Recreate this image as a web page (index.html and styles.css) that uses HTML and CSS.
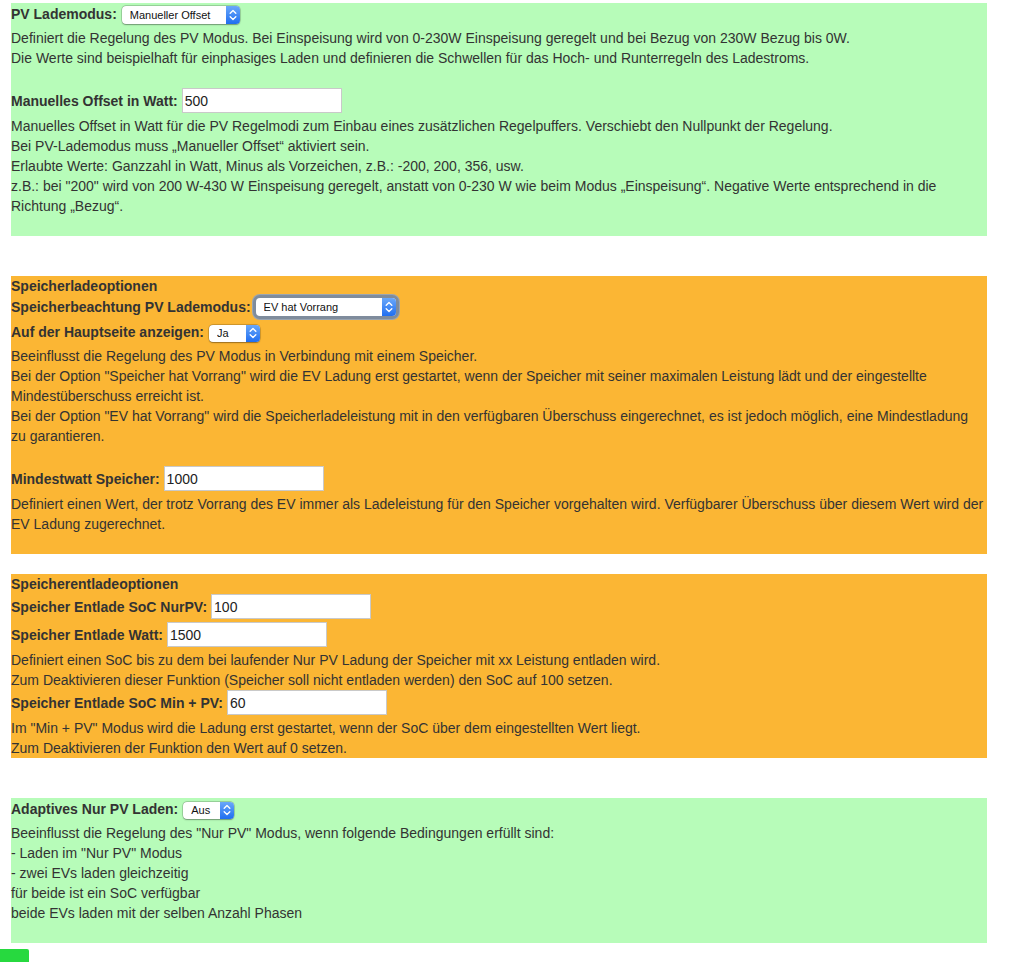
FILE: index.html
```html
<!DOCTYPE html>
<html lang="de">
<head>
<meta charset="utf-8">
<title>PV Einstellungen</title>
<link rel="stylesheet" href="styles.css">
</head>
<body>
<div class="page">

  <section class="panel green">
    <div class="ctl-row">
      <label class="lbl">PV Lademodus:</label>
      <span class="sel sel-pv">
        <select><option>Manueller Offset</option></select>
        <span class="stepper"><svg viewBox="0 0 14 18" width="14" height="18"><path d="M4.2 7.2 L7 4.6 L9.8 7.2 M4.2 10.8 L7 13.4 L9.8 10.8" fill="none" stroke="#fff" stroke-width="1.4" stroke-linecap="round" stroke-linejoin="round"/></svg></span>
      </span>
    </div>
    <p class="desc">Definiert die Regelung des PV Modus. Bei Einspeisung wird von 0-230W Einspeisung geregelt und bei Bezug von 230W Bezug bis 0W.<br>Die Werte sind beispielhaft für einphasiges Laden und definieren die Schwellen für das Hoch- und Runterregeln des Ladestroms.</p>
    <div class="blank"></div>
    <div class="inp-row">
      <label class="lbl">Manuelles Offset in Watt:</label>
      <input class="inp" type="text" value="500">
    </div>
    <p class="desc">Manuelles Offset in Watt für die PV Regelmodi zum Einbau eines zusätzlichen Regelpuffers. Verschiebt den Nullpunkt der Regelung.<br>Bei PV-Lademodus muss „Manueller Offset“ aktiviert sein.<br>Erlaubte Werte: Ganzzahl in Watt, Minus als Vorzeichen, z.B.: -200, 200, 356, usw.<br>z.B.: bei "200" wird von 200 W-430 W Einspeisung geregelt, anstatt von 0-230 W wie beim Modus „Einspeisung“. Negative Werte entsprechend in die Richtung „Bezug“.</p>
  </section>

  <section class="panel orange gap-40">
    <div class="title">Speicherladeoptionen</div>
    <div class="ctl-row">
      <label class="lbl">Speicherbeachtung PV Lademodus:</label>
      <span class="sel sel-speicher focused">
        <select><option>EV hat Vorrang</option></select>
        <span class="stepper"><svg viewBox="0 0 14 18" width="14" height="18"><path d="M4.2 7.2 L7 4.6 L9.8 7.2 M4.2 10.8 L7 13.4 L9.8 10.8" fill="none" stroke="#fff" stroke-width="1.4" stroke-linecap="round" stroke-linejoin="round"/></svg></span>
      </span>
    </div>
    <div class="ctl-row">
      <label class="lbl">Auf der Hauptseite anzeigen:</label>
      <span class="sel sel-small">
        <select><option>Ja</option></select>
        <span class="stepper"><svg viewBox="0 0 14 18" width="14" height="18"><path d="M4.2 7.2 L7 4.6 L9.8 7.2 M4.2 10.8 L7 13.4 L9.8 10.8" fill="none" stroke="#fff" stroke-width="1.4" stroke-linecap="round" stroke-linejoin="round"/></svg></span>
      </span>
    </div>
    <p class="desc">Beeinflusst die Regelung des PV Modus in Verbindung mit einem Speicher.<br>Bei der Option "Speicher hat Vorrang" wird die EV Ladung erst gestartet, wenn der Speicher mit seiner maximalen Leistung lädt und der eingestellte Mindestüberschuss erreicht ist.<br>Bei der Option "EV hat Vorrang" wird die Speicherladeleistung mit in den verfügbaren Überschuss eingerechnet, es ist jedoch möglich, eine Mindestladung zu&nbsp;garantieren.</p>
    <div class="blank"></div>
    <div class="inp-row">
      <label class="lbl">Mindestwatt Speicher:</label>
      <input class="inp" type="text" value="1000">
    </div>
    <p class="desc">Definiert einen Wert, der trotz Vorrang des EV immer als Ladeleistung für den Speicher vorgehalten wird. Verfügbarer Überschuss über diesem Wert wird der EV Ladung zugerechnet.</p>
  </section>

  <section class="panel orange gap-20 pad-none">
    <div class="title">Speicherentladeoptionen</div>
    <div class="inp-row">
      <label class="lbl">Speicher Entlade SoC NurPV:</label>
      <input class="inp" type="text" value="100">
    </div>
    <div class="inp-row">
      <label class="lbl">Speicher Entlade Watt:</label>
      <input class="inp" type="text" value="1500">
    </div>
    <p class="desc">Definiert einen SoC bis zu dem bei laufender Nur PV Ladung der Speicher mit xx Leistung entladen wird.<br>Zum Deaktivieren dieser Funktion (Speicher soll nicht entladen werden) den SoC auf 100 setzen.</p>
    <div class="inp-row">
      <label class="lbl">Speicher Entlade SoC Min + PV:</label>
      <input class="inp" type="text" value="60">
    </div>
    <p class="desc">Im "Min + PV" Modus wird die Ladung erst gestartet, wenn der SoC über dem eingestellten Wert liegt.<br>Zum Deaktivieren der Funktion den Wert auf 0 setzen.</p>
  </section>

  <section class="panel green gap-40">
    <div class="ctl-row">
      <label class="lbl">Adaptives Nur PV Laden:</label>
      <span class="sel sel-small">
        <select><option>Aus</option></select>
        <span class="stepper"><svg viewBox="0 0 14 18" width="14" height="18"><path d="M4.2 7.2 L7 4.6 L9.8 7.2 M4.2 10.8 L7 13.4 L9.8 10.8" fill="none" stroke="#fff" stroke-width="1.4" stroke-linecap="round" stroke-linejoin="round"/></svg></span>
      </span>
    </div>
    <p class="desc">Beeinflusst die Regelung des "Nur PV" Modus, wenn folgende Bedingungen erfüllt sind:<br>- Laden im "Nur PV" Modus<br>- zwei EVs laden gleichzeitig<br>für beide ist ein SoC verfügbar<br>beide EVs laden mit der selben Anzahl Phasen</p>
  </section>

</div>
<button class="save" type="button" aria-label="Speichern"></button>
</body>
</html>
```

FILE: styles.css
```css
html, body {
  margin: 0;
  padding: 0;
  background: #ffffff;
}

body {
  font-family: "Liberation Sans", Arial, Helvetica, sans-serif;
  font-size: 14px;
  line-height: 20px;
  color: #333333;
  overflow: hidden;
}

.page {
  padding-top: 3px;
  margin-left: 11px;
  width: 976px;
}

.panel {
  padding-bottom: 20px;
}

.panel.pad-none {
  padding-bottom: 0;
}

.green {
  background: #b7fcb9;
}

.orange {
  background: #fbb634;
}

.gap-40 { margin-top: 40px; }
.gap-20 { margin-top: 20px; }

.title {
  font-weight: bold;
  height: 20px;
}

.lbl {
  font-weight: bold;
  white-space: nowrap;
}

.ctl-row {
  display: flex;
  align-items: center;
  gap: 5px;
  height: 22px;
  margin-bottom: 3px;
}

.inp-row {
  display: flex;
  align-items: center;
  gap: 4px;
  height: 25px;
  margin-bottom: 3px;
}

.desc {
  margin: 0;
}

.blank {
  height: 20px;
}

.inp {
  box-sizing: border-box;
  width: 160px;
  height: 25px;
  margin: 0;
  padding: 1px 2px 0;
  border: 1px solid #c9c9c9;
  border-radius: 0;
  background: #ffffff;
  font-family: "Liberation Sans", Arial, Helvetica, sans-serif;
  font-size: 14px;
  color: #222222;
  outline: none;
}

.sel {
  display: inline-flex;
  align-items: stretch;
  box-sizing: border-box;
  height: 18px;
  border-radius: 4px;
  background: #ffffff;
  box-shadow: 0 0 0 0.5px rgba(0, 0, 0, 0.25), 0 0.5px 1.5px rgba(0, 0, 0, 0.3);
}

.sel select {
  flex: 1;
  min-width: 0;
  appearance: none;
  -webkit-appearance: none;
  border: 0;
  margin: 0;
  padding: 0 0 0 8px;
  background: transparent;
  font-family: "Liberation Sans", Arial, Helvetica, sans-serif;
  font-size: 11px;
  color: #111111;
  outline: none;
}

.stepper {
  width: 14px;
  flex: none;
  display: flex;
  align-items: center;
  justify-content: center;
  border-radius: 0 4px 4px 0;
  background: linear-gradient(#6aa8fa, #1f6ef0);
}

.stepper svg {
  display: block;
}

.sel-pv {
  width: 118px;
  margin-top: 1px;
}

.sel-speicher {
  width: 140px;
  height: 18px;
  margin-left: 0;
}

.sel-speicher.focused {
  box-shadow: 0 0 0 3px #7f8c9c, 0 0 0 4px #9aa5b1;
}

.sel-small {
  width: 51px;
  height: 17px;
  margin-top: 2px;
}

.save {
  display: block;
  margin-top: 6px;
  width: 29px;
  height: 30px;
  padding: 0;
  border: 0;
  border-radius: 0 2px 0 0;
  background: #27d93f;
}
```
